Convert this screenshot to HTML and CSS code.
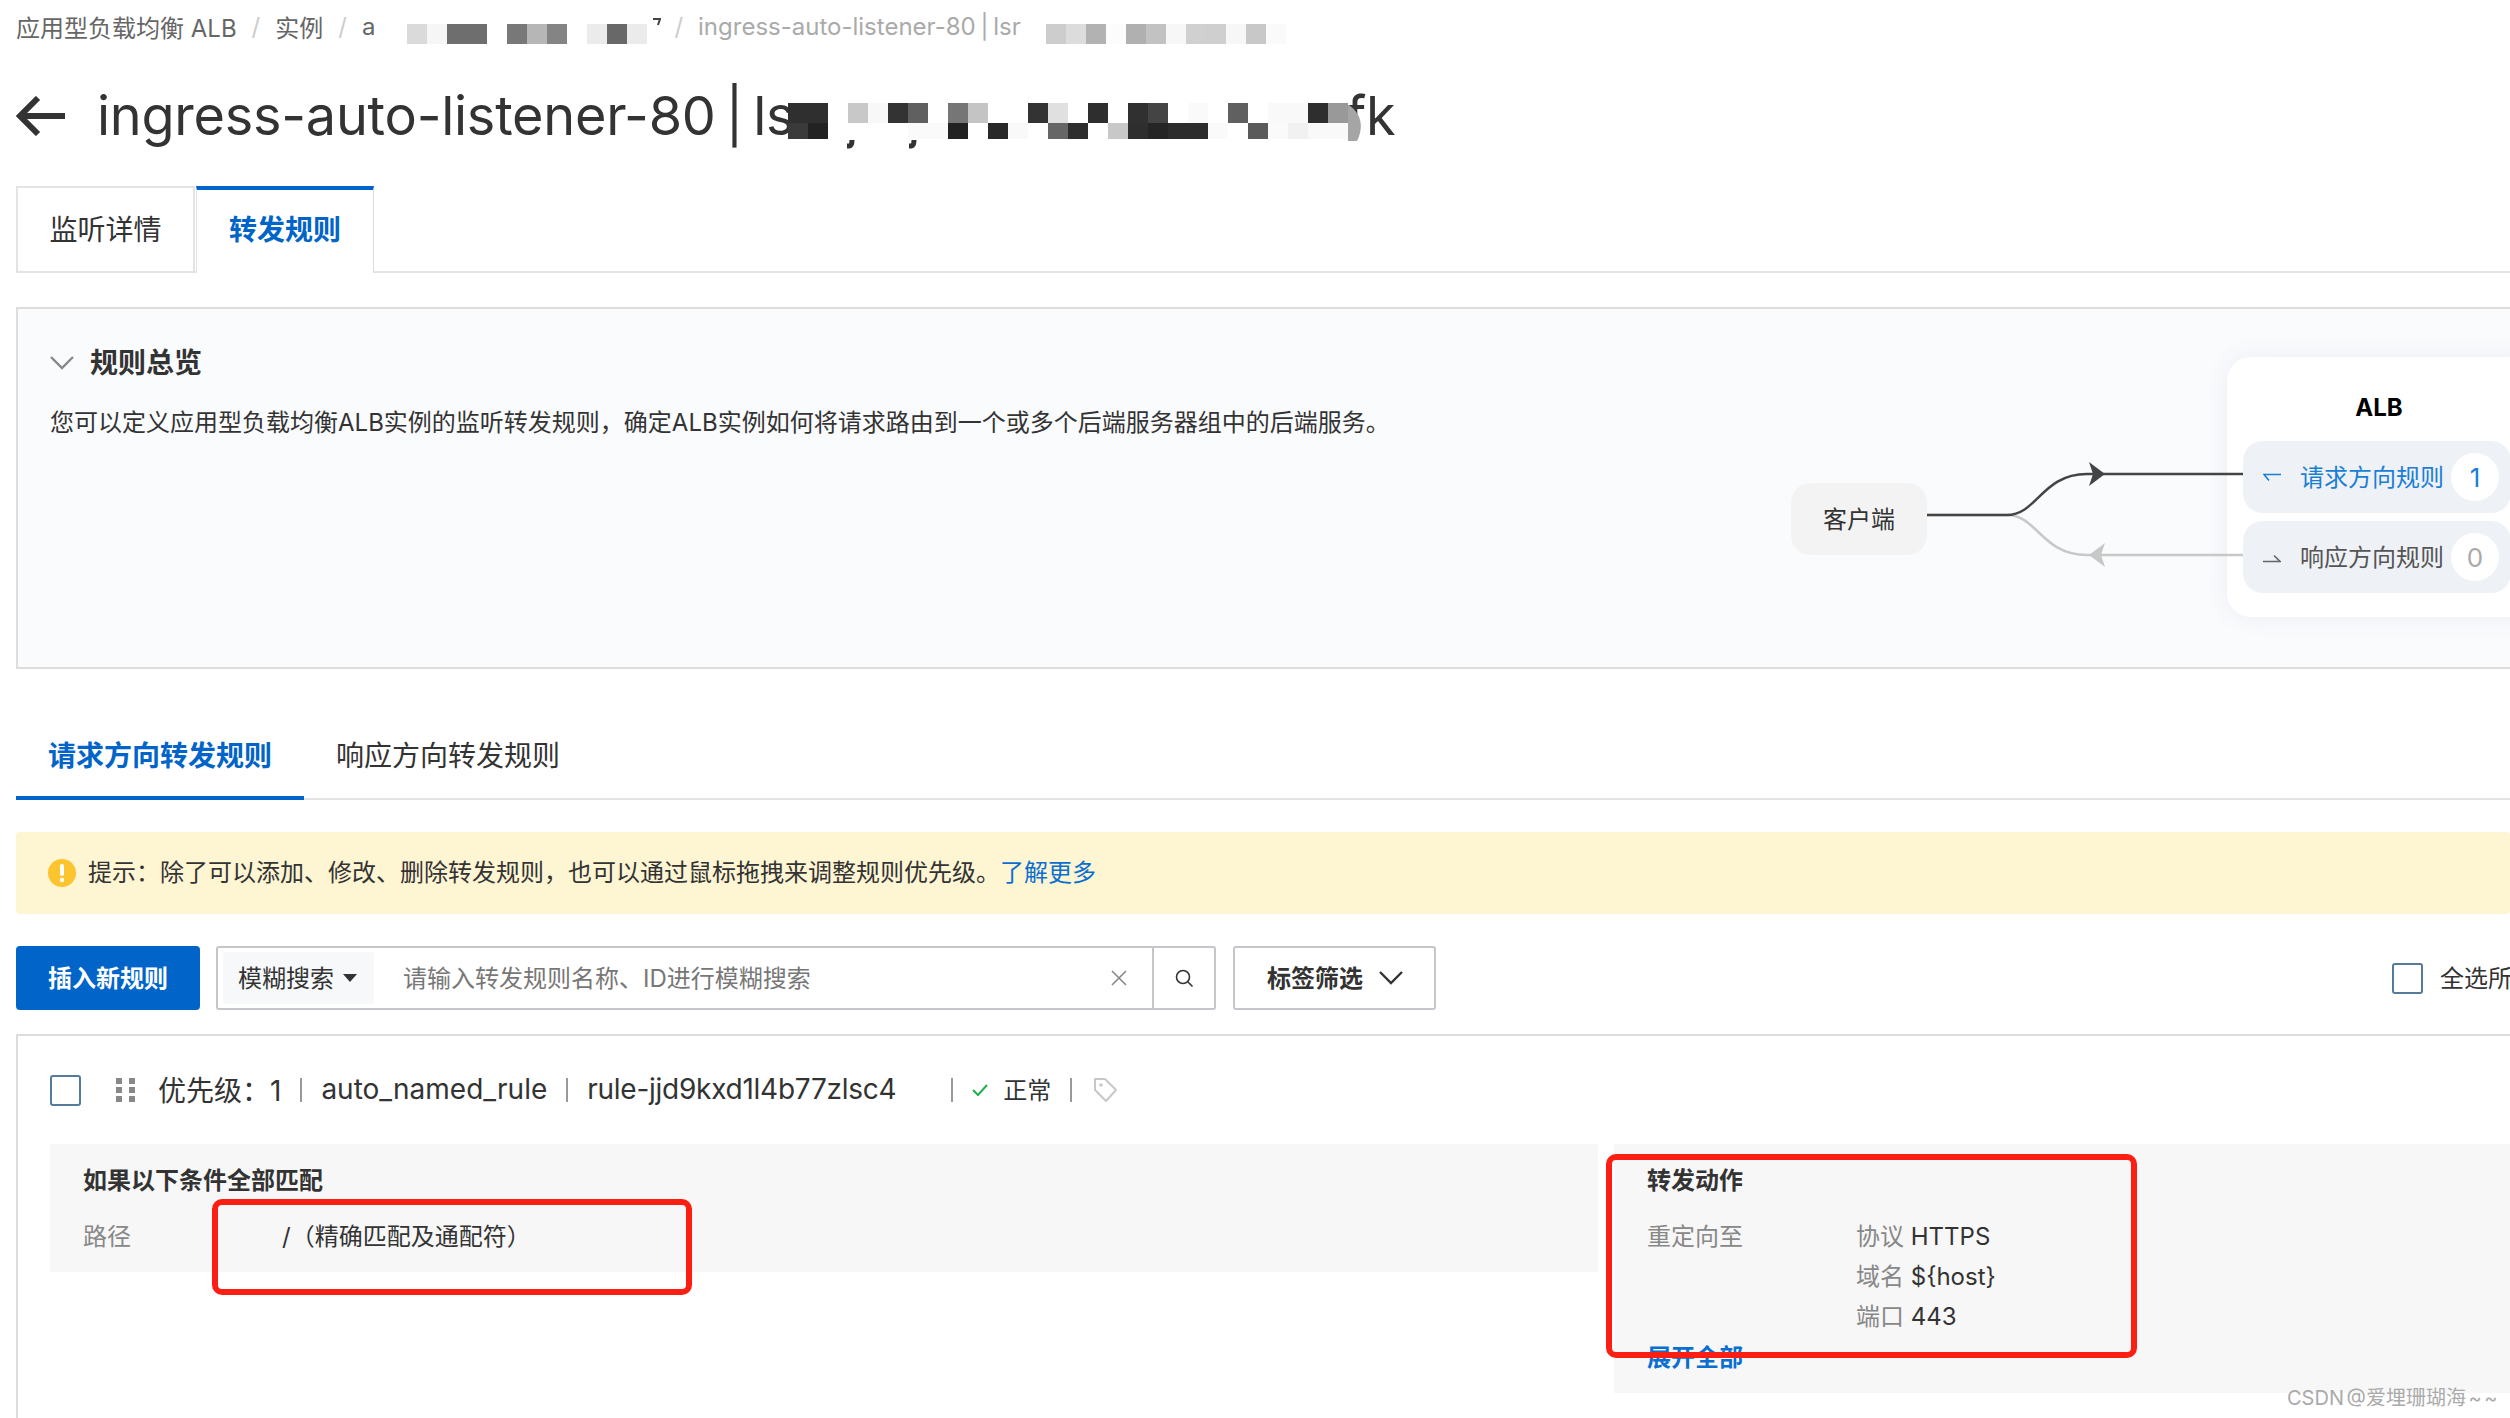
FILE: index.html
```html
<!DOCTYPE html>
<html lang="zh-CN">
  <head>
    <meta charset="UTF-8" />
    <title>ingress-auto-listener-80</title>
    <link rel="stylesheet" href="styles.css">
  </head>

  <body>
    <div id="page">
      <div class="crumbs">
        <span>应用型负载均衡 ALB</span>
        <span class="sep">/</span>
        <span>实例</span>
        <span class="sep">/</span>
        <span>a</span>
        <svg class="blur-a" width="240" height="20" viewBox="0 0 240 20">
          <g shape-rendering="crispEdges">
            <rect x="0" width="20" height="20" fill="#dadada" />
            <rect x="20" width="20" height="20" fill="#f6f6f6" />
            <rect x="40" width="40" height="20" fill="#6e6e6e" />
            <rect x="100" width="20" height="20" fill="#787878" />
            <rect x="120" width="20" height="20" fill="#b6b6b6" />
            <rect x="140" width="20" height="20" fill="#848484" />
            <rect x="180" width="20" height="20" fill="#ebebeb" />
            <rect x="200" width="20" height="20" fill="#686868" />
            <rect x="220" width="20" height="20" fill="#ebebeb" />
          </g>
        </svg>
        <svg class="tick" width="8" height="8" viewBox="0 0 8 8">
          <path d="M0 1h7L5 7" fill="none" stroke="#444" stroke-width="2" />
        </svg>
        <span class="sep sep-b">/</span>
        <span class="crumb-now">ingress-auto-listener-80 | lsr</span>
        <svg class="blur-b" width="240" height="20" viewBox="0 0 240 20">
          <g shape-rendering="crispEdges">
            <rect x="0" width="20" height="20" fill="#cdcdcd" />
            <rect x="20" width="20" height="20" fill="#dcdcdc" />
            <rect x="40" width="20" height="20" fill="#b2b2b2" />
            <rect x="60" width="20" height="20" fill="#fcfcfc" />
            <rect x="80" width="20" height="20" fill="#b0b0b0" />
            <rect x="100" width="20" height="20" fill="#c2c2c2" />
            <rect x="120" width="20" height="20" fill="#f7f7f7" />
            <rect x="140" width="20" height="20" fill="#d0d0d0" />
            <rect x="160" width="20" height="20" fill="#cfcfcf" />
            <rect x="180" width="20" height="20" fill="#f7f7f7" />
            <rect x="200" width="20" height="20" fill="#c8c8c8" />
            <rect x="220" width="20" height="20" fill="#fafafa" />
          </g>
        </svg>
      </div>

      <div class="title-row">
        <svg class="back" width="50" height="40" viewBox="0 0 50 40">
          <path d="M49 20H5M22 2L4 20l18 18" fill="none" stroke="#333" stroke-width="6" />
        </svg>
        <h1 class="title">ingress-auto-listener-80 | ls</h1>
        <div class="title-blur">
          <svg width="590" height="60" viewBox="0 0 590 60">
            <g fill="none" stroke="#333" stroke-width="5">
              <path d="M64 37c0 4-1 6-3 6h-2" />
              <path d="M126 37c0 4-1 6-3 6h-2" />
              <path d="M530 0c3-4 12-4 17 0" />
            </g>
            <path d="M561 0h-1v36h9c6-12 6-26-8-36z" transform="translate(0 2)" fill="#a5a5a5" />
            <g shape-rendering="crispEdges">
              <rect x="0" width="40" height="20" fill="#2f2f2f" />
              <rect x="60" width="20" height="20" fill="#c8c8c8" />
              <rect x="80" width="20" height="20" fill="#f8f8f8" />
              <rect x="100" width="20" height="20" fill="#333" />
              <rect x="120" width="20" height="20" fill="#606060" />
              <rect x="160" width="20" height="20" fill="#767676" />
              <rect x="180" width="20" height="20" fill="#c4c4c4" />
              <rect x="240" width="20" height="20" fill="#333" />
              <rect x="260" width="20" height="20" fill="#e0e0e0" />
              <rect x="300" width="20" height="20" fill="#2e2e2e" />
              <rect x="340" width="20" height="20" fill="#303030" />
              <rect x="360" width="20" height="20" fill="#444" />
              <rect x="400" width="20" height="20" fill="#fafafa" />
              <rect x="440" width="20" height="20" fill="#606060" />
              <rect x="480" width="40" height="20" fill="#f9f9f9" />
              <rect x="520" width="20" height="20" fill="#2e2e2e" />
              <rect x="540" width="20" height="20" fill="#999" />
              <rect x="0" y="20" width="20" height="16" fill="#3a3a3a" />
              <rect x="20" y="20" width="20" height="16" fill="#222" />
              <rect x="120" y="20" width="40" height="16" fill="#fafafa" />
              <rect x="160" y="20" width="20" height="16" fill="#222" />
              <rect x="200" y="20" width="20" height="16" fill="#282828" />
              <rect x="220" y="20" width="20" height="16" fill="#f9f9f9" />
              <rect x="260" y="20" width="20" height="16" fill="#666" />
              <rect x="280" y="20" width="20" height="16" fill="#2e2e2e" />
              <rect x="320" y="20" width="20" height="16" fill="#c8c8c8" />
              <rect x="340" y="20" width="20" height="16" fill="#2e2e2e" />
              <rect x="360" y="20" width="20" height="16" fill="#252525" />
              <rect x="380" y="20" width="40" height="16" fill="#2c2c2c" />
              <rect x="420" y="20" width="20" height="16" fill="#fafafa" />
              <rect x="460" y="20" width="20" height="16" fill="#5a5a5a" />
              <rect x="480" y="20" width="20" height="16" fill="#fafafa" />
              <rect x="500" y="20" width="20" height="16" fill="#f1f1f1" />
              <rect x="520" y="20" width="40" height="16" fill="#f9f9f9" />
            </g>
          </svg>
        </div>
        <span class="title title-end">fk</span>
      </div>

      <div class="box-tabs">
        <div class="box-tab">监听详情</div>
        <div class="box-tab active">转发规则</div>
      </div>

      <div class="overview">
        <div class="overview-head">
          <svg width="24" height="14" viewBox="0 0 24 14">
            <path d="M1 1l11 11L23 1" fill="none" stroke="#888" stroke-width="2.4" />
          </svg>
          <span>规则总览</span>
        </div>
        <p class="overview-desc">您可以定义应用型负载均衡ALB实例的监听转发规则，确定ALB实例如何将请求路由到一个或多个后端服务器组中的后端服务。</p>

        <div class="diagram">
          <div class="client">客户端</div>
          <div class="alb">
            <div class="alb-name">ALB</div>
            <div class="alb-row on">
              <svg width="18" height="10" viewBox="0 0 18 10">
                <path d="M18 1.5H1l5 6" fill="none" stroke="#1a7fd4" stroke-width="1.6" />
              </svg>
              <span class="alb-label">请求方向规则</span>
              <span class="alb-count">1</span>
            </div>
            <div class="alb-row">
              <svg width="18" height="10" viewBox="0 0 18 10">
                <path d="M0 8.5h17l-6-6" fill="none" stroke="#666" stroke-width="1.6" />
              </svg>
              <span class="alb-label">响应方向规则</span>
              <span class="alb-count">0</span>
            </div>
          </div>
          <svg class="wires" width="460" height="260" viewBox="0 0 460 260">
            <path d="M136 158h80c30 0 35 40 80 40h156" fill="none" stroke="#c8c8c8" stroke-width="2.5" />
            <path d="M314 186l-16 12 16 12-4-12z" fill="#c8c8c8" />
            <path d="M136 158h80c30 0 35-41 80-41h156" fill="none" stroke="#444" stroke-width="2.5" />
            <path d="M298 105l16 12-16 12 4-12z" fill="#444" />
          </svg>
        </div>
      </div>

      <div class="line-tabs">
        <div class="line-tab active">请求方向转发规则</div>
        <div class="line-tab">响应方向转发规则</div>
      </div>

      <div class="notice">
        <svg width="28" height="28" viewBox="0 0 28 28">
          <circle cx="14" cy="14" r="14" fill="#fcc42e" />
          <rect x="12" y="5" width="4" height="12" rx="2" fill="#fff" />
          <circle cx="14" cy="21" r="2.2" fill="#fff" />
        </svg>
        <span class="notice-text">提示：除了可以添加、修改、删除转发规则，也可以通过鼠标拖拽来调整规则优先级。<a href="#" class="link">了解更多</a></span>
      </div>

      <div class="toolbar">
        <button class="btn-primary">插入新规则</button>
        <div class="search">
          <div class="search-type"><span class="lift">模糊搜索</span><span class="caret"></span></div>
          <span class="search-hint lift">请输入转发规则名称、ID进行模糊搜索</span>
          <svg class="search-clear" width="18" height="18" viewBox="0 0 18 18">
            <path d="M2 2l14 14M16 2L2 16" fill="none" stroke="#888" stroke-width="1.6" />
          </svg>
          <div class="search-go">
            <svg width="22" height="22" viewBox="0 0 22 22">
              <circle cx="10" cy="10" r="6.5" fill="none" stroke="#333" stroke-width="1.6" />
              <path d="M15 15l4.5 4.5" fill="none" stroke="#333" stroke-width="1.6" />
            </svg>
          </div>
        </div>
        <div class="tag-filter">
          <span class="lift">标签筛选</span>
          <svg width="24" height="14" viewBox="0 0 24 14">
            <path d="M1 1l11 11L23 1" fill="none" stroke="#333" stroke-width="2.4" />
          </svg>
        </div>
        <div class="select-all">
          <span class="check"></span>
          <span class="lift">全选所有</span>
        </div>
      </div>

      <div class="rule-card">
        <div class="rule-head">
          <span class="check"></span>
          <span class="dots"><i></i><i></i><i></i><i></i><i></i><i></i></span>
          <span class="rule-meta">优先级：1</span>
          <span class="bar"></span>
          <span class="rule-meta">auto_named_rule</span>
          <span class="bar"></span>
          <span class="rule-meta rule-id">rule-jjd9kxd1l4b77zlsc4</span>
          <span class="bar"></span>
          <svg class="ok" width="16" height="12" viewBox="0 0 16 12">
            <path d="M1 6l5 5L15 1" fill="none" stroke="#1eb04a" stroke-width="2" />
          </svg>
          <span class="rule-state lift">正常</span>
          <span class="bar"></span>
          <svg class="tag" width="26" height="26" viewBox="0 0 26 26">
            <path d="M3 2h10l11 11-10 11L3 13z" fill="none" stroke="#c8c8c8" stroke-width="2" stroke-linejoin="round" />
            <circle cx="9" cy="8" r="1.8" fill="#c8c8c8" />
          </svg>
        </div>

        <div class="rule-body">
          <div class="rule-box cond">
            <div class="box-title">如果以下条件全部匹配</div>
            <div class="cond-row">
              <span class="cond-key">路径</span>
              <span>/（精确匹配及通配符）</span>
            </div>
            <div class="red-mark mark-cond"></div>
          </div>
          <div class="rule-box action">
            <div class="box-title">转发动作</div>
            <div class="action-rows">
              <span class="action-key">重定向至</span>
              <div>
                <div class="action-row"><span class="muted">协议</span> HTTPS</div>
                <div class="action-row"><span class="muted">域名</span> ${host}</div>
                <div class="action-row"><span class="muted">端口</span> 443</div>
              </div>
            </div>
            <div class="expand">展开全部</div>
            <div class="red-mark mark-action"></div>
          </div>
        </div>
      </div>

      <div class="watermark">CSDN @爱埋珊瑚海 ~ ~</div>
    </div>
  </body>
</html>
```

FILE: styles.css
```css
html,
body {
  margin: 0;
  overflow: hidden;
}

#page {
  position: relative;
  width: 2510px;
  height: 1418px;
  overflow: hidden;
  background-color: white;
  color: #333;
  font-family: Inter, "Noto Sans CJK SC", sans-serif;
  font-size: 24px;
}

.lift {
  padding-bottom: 3px;
}

/* breadcrumb */
.crumbs {
  display: flex;
  align-items: center;
  height: 54px;
  padding: 0 0 2px 16px;
  box-sizing: border-box;
  color: #666;
}

.sep {
  margin: 0 15px;
  color: #ccc;
}

.blur-a {
  flex: none;
  margin: 16px 0 0 32px;
}

.tick {
  flex: none;
  margin-left: 6px;
  margin-top: -9px;
}

.sep-b {
  margin-left: 13px;
}

.crumb-now {
  color: #aaa;
  white-space: nowrap;
  word-spacing: -2px;
}

.blur-b {
  flex: none;
  margin: 16px 0 0 25px;
}

/* title */
.title-row {
  display: flex;
  align-items: center;
  height: 58px;
  margin-top: 33px;
  padding-left: 16px;
}

.back {
  flex: none;
  margin-right: 31px;
}

.title {
  margin: 0;
  font-size: 54px;
  font-weight: 400;
  letter-spacing: -0.25px;
  line-height: 58px;
  white-space: nowrap;
  word-spacing: -5px;
}

.title-blur {
  position: relative;
  flex: none;
  width: 558px;
  height: 58px;
  margin-left: -6px;
}

.title-blur svg {
  position: absolute;
  left: 0;
  top: 16px;
  z-index: 2;
}

/* box tabs */
.box-tabs {
  display: flex;
  height: 87px;
  margin: 41px 0 0 16px;
  border-bottom: 2px solid #e3e3e3;
  box-sizing: border-box;
}

.box-tab {
  width: 179px;
  height: 85px;
  box-sizing: border-box;
  border: 2px solid #e3e3e3;
  border-bottom: none;
  font-size: 28px;
  line-height: 85px;
  text-align: center;
}

.box-tab.active {
  height: 87px;
  width: 178px;
  margin-left: 1px;
  border-top: 4px solid #0064c8;
  border-left: 1px solid #e3e3e3;
  border-right: 1px solid #d8dde5;
  background-color: white;
  color: #0064c8;
  font-weight: 700;
  line-height: 81px;
}

/* overview */
.overview {
  position: relative;
  height: 362px;
  margin: 34px 0 0 16px;
  padding-left: 32px;
  box-sizing: border-box;
  border: 2px solid #ddd;
  border-right: none;
  background-color: #fafbfd;
}

.overview-head {
  display: flex;
  align-items: center;
  gap: 16px;
  padding-top: 36px;
  font-size: 28px;
  font-weight: 700;
  line-height: 36px;
}

.overview-desc {
  margin: 24px 0 0;
  line-height: 36px;
}

.diagram {
  position: absolute;
  left: 1773px;
  top: 48px;
  width: 720px;
  height: 260px;
}

.client {
  position: absolute;
  left: 0;
  top: 126px;
  width: 136px;
  height: 72px;
  border-radius: 20px;
  background-color: #f3f3f3;
  line-height: 74px;
  text-align: center;
}

.alb {
  position: absolute;
  left: 436px;
  top: 0;
  width: 320px;
  height: 260px;
  padding: 33px 0 0 16px;
  box-sizing: border-box;
  border-radius: 24px;
  background-color: white;
  box-shadow: 0 0 24px rgba(60, 80, 120, 0.08);
}

.alb-name {
  width: 272px;
  color: black;
  font-weight: 700;
  line-height: 36px;
  text-align: center;
}

.alb-row {
  display: flex;
  align-items: center;
  width: 268px;
  height: 72px;
  margin-top: 8px;
  padding-left: 20px;
  box-sizing: border-box;
  border-radius: 20px;
  background-color: #eef1f6;
  color: #555;
}

.alb-row svg {
  margin-top: 2px;
}

.alb-name + .alb-row {
  margin-top: 15px;
}

.alb-label {
  margin-left: 19px;
  padding-bottom: 3px;
}

.alb-count {
  width: 48px;
  height: 48px;
  margin-left: 7px;
  border-radius: 50%;
  background-color: white;
  color: #aaa;
  font-size: 26px;
  line-height: 50px;
  text-align: center;
}

.alb-row.on {
  color: #1a7fd4;
}

.alb-row.on .alb-count {
  color: #1a7fd4;
}

.wires {
  position: absolute;
  left: 0;
  top: 0;
}

/* line tabs */
.line-tabs {
  display: flex;
  height: 76px;
  margin: 55px 0 0 16px;
  box-sizing: border-box;
  border-bottom: 2px solid #e3e3e3;
}

.line-tab {
  width: 288px;
  height: 76px;
  box-sizing: border-box;
  font-size: 28px;
  line-height: 64px;
  text-align: center;
}

.line-tab.active {
  border-bottom: 4px solid #0064c8;
  color: #0064c8;
  font-weight: 700;
}

/* notice */
.notice {
  display: flex;
  align-items: center;
  gap: 12px;
  height: 82px;
  margin: 32px 0 0 16px;
  padding-left: 32px;
  border-radius: 4px;
  background-color: #fef5d3;
}

.notice-text {
  padding-bottom: 5px;
}

.link {
  color: #0a6fd0;
  text-decoration: none;
}

/* toolbar */
.toolbar {
  display: flex;
  height: 64px;
  margin: 32px 0 0 16px;
}

.btn-primary {
  flex: none;
  width: 184px;
  height: 64px;
  padding: 0 0 3px;
  border: none;
  border-radius: 4px;
  background-color: #0064c8;
  color: white;
  font-family: inherit;
  font-size: 24px;
  font-weight: 700;
}

.search {
  display: flex;
  flex: none;
  align-items: center;
  width: 1000px;
  height: 64px;
  margin-left: 16px;
  padding-left: 5px;
  box-sizing: border-box;
  border: 2px solid #c4c6cc;
  border-radius: 3px;
}

.search-type {
  display: flex;
  align-items: center;
  width: 151px;
  height: 52px;
  padding-left: 15px;
  box-sizing: border-box;
  border-radius: 3px;
  background-color: #f7f8fa;
}

.caret {
  width: 0;
  height: 0;
  margin-left: 9px;
  border: 7px solid transparent;
  border-top: 8px solid #333;
  border-bottom: none;
}

.search-hint {
  margin-left: 29px;
  color: #777;
}

.search-clear {
  margin-left: auto;
  margin-right: 24px;
}

.search-go {
  display: flex;
  align-items: center;
  justify-content: center;
  width: 60px;
  height: 60px;
  border-left: 2px solid #c4c6cc;
}

.tag-filter {
  display: flex;
  flex: none;
  align-items: center;
  gap: 16px;
  width: 203px;
  height: 64px;
  margin-left: 17px;
  padding-left: 32px;
  box-sizing: border-box;
  border: 2px solid #c4c6cc;
  border-radius: 3px;
  font-weight: 700;
}

.select-all {
  display: flex;
  flex: none;
  align-items: center;
  gap: 17px;
  margin-left: 956px;
  white-space: nowrap;
}

.check {
  display: block;
  flex: none;
  width: 31px;
  height: 31px;
  box-sizing: border-box;
  border: 2px solid #557a9a;
  border-radius: 3px;
  background-color: white;
}

/* rule card */
.rule-card {
  height: 500px;
  margin: 24px 0 0 16px;
  padding: 36px 0 0 32px;
  box-sizing: border-box;
  border-top: 2px solid #ddd;
  border-left: 2px solid #ddd;
}

.rule-head {
  display: flex;
  align-items: center;
  height: 36px;
}

.dots {
  display: grid;
  grid-template-columns: 6px 6px;
  gap: 3px 7px;
  margin-left: 35px;
}

.dots i {
  width: 6px;
  height: 6px;
  background-color: #888;
}

.rule-meta {
  margin-left: 23px;
  padding-bottom: 3px;
  font-size: 28px;
  white-space: nowrap;
}

.bar {
  width: 2px;
  height: 24px;
  margin-left: 19px;
  background-color: #999;
}

.bar + .rule-meta {
  margin-left: 19px;
}

.rule-id {
  letter-spacing: -0.26px;
}

.rule-id + .bar {
  margin-left: 55px;
}

.ok {
  margin-left: 19px;
}

.rule-state {
  margin-left: 15px;
}

.tag {
  margin-left: 20px;
}

.rule-body {
  display: flex;
  align-items: flex-start;
  gap: 16px;
  margin-top: 36px;
}

.rule-box {
  position: relative;
  padding: 21px 0 0 33px;
  box-sizing: border-box;
  background-color: #f7f7f7;
}

.cond {
  flex: none;
  width: 1548px;
  height: 128px;
}

.action {
  flex: 1;
  height: 249px;
}

.box-title {
  font-weight: 700;
  line-height: 32px;
}

.cond-row {
  display: flex;
  margin-top: 24px;
  line-height: 32px;
}

.cond-key {
  width: 199px;
  color: #888;
}

.action-rows {
  display: flex;
  margin-top: 20px;
  line-height: 40px;
}

.action-key {
  width: 209px;
  color: #888;
}

.muted {
  color: #888;
}

.expand {
  margin-top: 5px;
  color: #0a6fd0;
  font-weight: 700;
  line-height: 32px;
}

/* red marks drawn over the screenshot */
.red-mark {
  position: absolute;
  box-sizing: border-box;
  border: 6px solid #fb1f13;
  border-radius: 10px;
}

.mark-cond {
  left: 162px;
  top: 55px;
  width: 480px;
  height: 96px;
}

.mark-action {
  left: -8px;
  top: 10px;
  width: 531px;
  height: 204px;
}

.watermark {
  position: absolute;
  left: 2287px;
  top: 1385px;
  color: #aaa;
  font-size: 20px;
  line-height: 26px;
  white-space: nowrap;
  word-spacing: -3px;
}
```
